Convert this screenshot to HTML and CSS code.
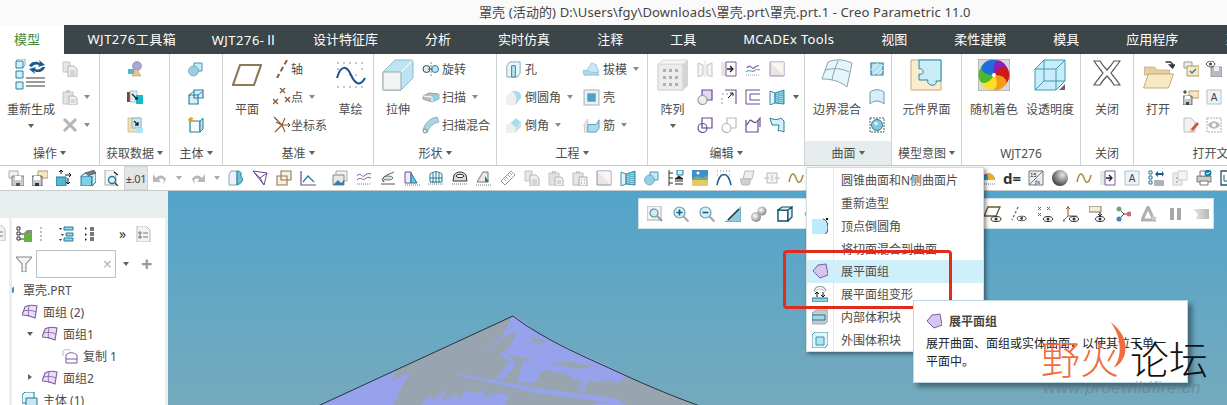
FILE: index.html
```html
<!DOCTYPE html>
<html lang="zh">
<head>
<meta charset="utf-8">
<title>Creo Parametric</title>
<link rel="stylesheet" href="styles.css">
</head>
<body>
<svg class="defs" aria-hidden="true">
<defs>
<symbol id="regen" viewBox="0 0 32 32"><g fill="#d2eef8" stroke="#2a7f9b"><path d="M1 2h7v7H1zM1 12h7v7H1zM1 23h7v7H1z"/></g><path d="M1 2l2-2h7v6l-2 3" fill="none" stroke="#2a7f9b" opacity=".6"/><path d="M14 7a7 6 0 0 1 11-3l-1-3 6 5-7 2 1-2a5 4 0 0 0-7 2z" fill="#1c5a8a"/><path d="M30 8a7 6 0 0 1-11 4l1 3-6-5 7-2-1 2a5 4 0 0 0 7-2z" fill="#1c5a8a"/><path d="M11 19h19M11 23h19M11 27h19" stroke="#9a9a9a" stroke-width="2"/></symbol>
<symbol id="copy" viewBox="0 0 16 16"><path d="M1 1h7v10H1z" fill="#e6e6e6" stroke="#c4c4c4"/><path d="M6 5h6l3 3v8H6z" fill="#eee" stroke="#b4b4b4"/><path d="M8 10h5M8 12h5M8 14h5" stroke="#bbb"/></symbol>
<symbol id="paste" viewBox="0 0 16 16"><path d="M1 3h10v12H1z" fill="#e2e2e2" stroke="#c4c4c4"/><path d="M4 1h4v3H4z" fill="#ccc"/><path d="M7 7h6l2 2v7H7z" fill="#f0f0f0" stroke="#b4b4b4"/><path d="M9 11h4M9 13h4" stroke="#bbb"/></symbol>
<symbol id="xgray" viewBox="0 0 16 16"><path d="M2 2l12 12M14 2L2 14" stroke="#b5b5b5" stroke-width="3"/></symbol>
<symbol id="data1" viewBox="0 0 16 16"><circle cx="10" cy="5" r="4.5" fill="#a9a6dd" stroke="#7d7ab8" stroke-width=".6"/><path d="M1 8h6v5H1z" fill="#56b4c9"/><path d="M9 7l5 8H5z" fill="#e6c68c" stroke="#a98d55" stroke-width=".5"/></symbol>
<symbol id="data2" viewBox="0 0 16 16"><path d="M0 3h3v10H0z" fill="#8f3c3c"/><path d="M3 2h7v11H3z" fill="#d8f0f5" stroke="#6ba9b8" stroke-width=".6"/><path d="M9 6h7v9H9z" fill="#16b9c4"/><path d="M5 5l5 5M8 10h2V8" stroke="#222" stroke-width="1.4" fill="none"/></symbol>
<symbol id="data3" viewBox="0 0 16 16"><path d="M1 1h13v14H1z" fill="#f4dfb8" stroke="#bda271" stroke-width=".6"/><path d="M5 1h9v10H5z" fill="#cbe8f1" stroke="#5f9db0" stroke-width=".6"/><path d="M9 11h7v5H9z" fill="#aee3f2"/><path d="M7 4l4 4M8 8h3V5" stroke="#222" stroke-width="1.3" fill="none"/></symbol>
<symbol id="bodySphere" viewBox="0 0 16 16"><path d="M6 2h8v8H6z" fill="#c7e8f4" stroke="#4b97ae"/><circle cx="5.5" cy="10" r="5" fill="#9bcde0" stroke="#4b97ae" stroke-width=".6"/></symbol>
<symbol id="bodyCube2" viewBox="0 0 16 16"><path d="M6 1h9v8H6zM1 6h9v9H1z" fill="#d7f0f8" stroke="#2a7f9b" stroke-width="1.2"/><path d="M1 6l4-3M10 6l4-3" stroke="#2a7f9b"/></symbol>
<symbol id="bodyNew" viewBox="0 0 16 16"><path d="M2 4h10v11H2z" fill="#f3fbfe" stroke="#2a7f9b" stroke-width="1.2"/><path d="M12 4l3-3v11l-3 3z" fill="#b8e4f2" stroke="#2a7f9b"/><path d="M3 3l0-3M3 3l-3 0M3 3l-2-2M3 3l2-2M3 3l2 1" stroke="#e8a21a" stroke-width="1.3"/></symbol>
<symbol id="plane" viewBox="0 0 30 24"><path d="M8 2h21l-7 20H1z" fill="none" stroke="#8e7a58" stroke-width="2.2"/></symbol>
<symbol id="axis" viewBox="0 0 18 18"><path d="M14 0L4 18" stroke="#8a5a35" stroke-width="2" stroke-dasharray="5 3"/></symbol>
<symbol id="point" viewBox="0 0 18 18"><path d="M7 0l5 5M12 0L7 5M0 11l5 5M5 11l-5 5M12 9l5 5M17 9l-5 5" stroke="#8a5a35" stroke-width="1.3"/></symbol>
<symbol id="csys" viewBox="0 0 18 18"><path d="M9 9L1 1M9 9h8M9 9L2 16M9 9l3-7M9 9l3 7M9 9L3 6" stroke="#8a5a35" stroke-width="1.1"/><path d="M2 2l2 2M15 7l2 2-2 2" stroke="#444" fill="none"/></symbol>
<symbol id="sketch" viewBox="0 0 30 28"><g fill="#c8c8c8"><path d="M1 1h2v2H1zM7 1h2v2H7zM13 1h2v2h-2zM19 1h2v2h-2zM25 1h2v2h-2zM1 7h2v2H1zM25 7h2v2h-2zM13 13h2v2h-2zM19 13h2v2h-2zM1 25h2v2H1zM7 25h2v2H7zM13 25h2v2h-2zM19 25h2v2h-2zM25 25h2v2h-2z"/></g><path d="M1 17C5 3 11 5 15 14s9 12 14 3" fill="none" stroke="#1f4f8f" stroke-width="2"/></symbol>
<symbol id="extrude" viewBox="0 0 32 32"><path d="M1 13l12-12h18v18L19 31H1z" fill="#bce4f2" stroke="#8fb9c6"/><path d="M1 13h18v18H1z" fill="#f2f3f3" stroke="#9aa" /><path d="M19 13L31 1" stroke="#fff"/></symbol>
<symbol id="revolve" viewBox="0 0 18 14"><path d="M9 0v14" stroke="#888" stroke-dasharray="2 1"/><circle cx="4.5" cy="7" r="3.5" fill="#d2eef8" stroke="#444"/><circle cx="13" cy="7" r="3.5" fill="#bfe3f0" stroke="#2a7f9b"/><path d="M6 7h5" stroke="#666"/></symbol>
<symbol id="sweep" viewBox="0 0 18 14"><path d="M1 6l6-3 10 1v5l-7 3-9-3z" fill="#b8bec2" stroke="#7d8488" stroke-width=".7"/><path d="M10 7l7-3v5l-7 3z" fill="#8ed0e6"/><path d="M1 6l9 1v5" stroke="#fff" fill="none"/></symbol>
<symbol id="sblend" viewBox="0 0 18 18"><path d="M1 14C3 7 8 2 15 1l2 5C11 7 7 11 5 17z" fill="#a4d6e8" stroke="#7d9aa6" stroke-width=".7"/><circle cx="3" cy="15" r="2" fill="#eee" stroke="#888"/></symbol>
<symbol id="hole" viewBox="0 0 18 18"><path d="M2 5l3-4h11v12l-3 4H2z" fill="#e9f6fb" stroke="#7aa7b7"/><path d="M7 5h4v12H7z" fill="#bfe3f0" stroke="#2a7f9b"/></symbol>
<symbol id="round" viewBox="0 0 18 18"><path d="M1 8l6-6h5c4 1 5 3 5 7l-6 8H1z" fill="#efefef"/><path d="M7 2h5c4 1 5 3 5 7l-6 8 1-7C12 6 10 4 7 2z" fill="#a6dcef"/></symbol>
<symbol id="chamfer" viewBox="0 0 18 18"><path d="M1 8l6-2 4 4v7H1z" fill="#efefef"/><path d="M6 6l6-5 5 5-6 5z" fill="#a6dcef"/><path d="M17 6v4l-6 7v-6z" fill="#d8d8d8"/></symbol>
<symbol id="draft" viewBox="0 0 18 16"><path d="M0 9h14l3 5H1z" fill="#a6dcef" stroke="#7aa7b7" stroke-width=".6"/><path d="M4 9l5-8 5 2 3 8H9z" fill="#c5eaf5" stroke="#8db5c2" stroke-width=".7"/></symbol>
<symbol id="shell" viewBox="0 0 16 16"><path d="M1 1h14v14H1z" fill="#eef1f2" stroke="#a8b4b8"/><path d="M4 4h8v8H4z" fill="#4ba3c9"/></symbol>
<symbol id="rib" viewBox="0 0 18 18"><path d="M1 8l4-6 1 12-4 3z" fill="#e4e4e4" stroke="#aaa" stroke-dasharray="1 1"/><path d="M5 8h9l3-5v9l-3 4H5z" fill="#a6dcef" stroke="#5a9db4"/></symbol>
<symbol id="pattern" viewBox="0 0 32 32"><path d="M1 5h25v26H1z" fill="#ececec" stroke="#c8c8c8"/><path d="M26 5l5-4v26l-5 4z" fill="#d5d5d5"/><path d="M1 5l5-4h25l-5 4z" fill="#f5f5f5" stroke="#ddd"/><g fill="#aab0b4"><path d="M6 10h3v3H6zM12 10h3v3h-3zM18 10h3v3h-3zM6 17h3v3H6zM12 17h3v3h-3zM18 17h3v3h-3zM6 24h3v3H6zM12 24h3v3h-3zM18 24h3v3h-3z"/></g></symbol>
<symbol id="mirror" viewBox="0 0 16 16"><path d="M1 2l5 2v10l-5 2zM15 2l-5 2v10l5 2z" fill="#f3f3f3" stroke="#c4c4c4"/><path d="M8 0v16" stroke="#ddd"/></symbol>
<symbol id="extend" viewBox="0 0 16 16"><path d="M0 1h5v14H0z" fill="#e6e6e6"/><path d="M5 1h10v14H5z" fill="#fff" stroke="#7e5aa0"/><path d="M6 8h5M9 5l3 3-3 3" stroke="#222" stroke-width="1.3" fill="none"/></symbol>
<symbol id="wave" viewBox="0 0 16 16"><path d="M2 7c3-5 5 2 7 0s3-3 5-2" fill="none" stroke="#7e5aa0" stroke-width="1.2"/><path d="M1 11c3-4 6 1 8-1s3-2 6-1" fill="none" stroke="#5ba7c4" stroke-width="1.2"/><path d="M1 14h14" stroke="#9a9a9a" stroke-dasharray="1 1"/></symbol>
<symbol id="trim" viewBox="0 0 16 16"><path d="M1 1h14v14H1z" fill="#e8e8e0" stroke="#a183bd"/><path d="M1 1l14 14V1z" fill="#fff" opacity=".6"/></symbol>
<symbol id="merge" viewBox="0 0 16 16"><path d="M5 1h10v10H5z" fill="#e2d9f0" stroke="#6b4a90" stroke-width="1.2"/><circle cx="5.5" cy="11" r="4.5" fill="#eee" stroke="#9a9a9a" stroke-width="1.2"/></symbol>
<symbol id="offset" viewBox="0 0 16 16"><path d="M1 5h2M5 5h2M9 5h2M1 9v2M1 13v2" stroke="#999"/><path d="M4 1h11v14" fill="none" stroke="#6b4a90" stroke-width="1.1"/><path d="M7 9l5-5M9 4h3v3" stroke="#222" fill="none"/></symbol>
<symbol id="thick" viewBox="0 0 16 16"><path d="M15 1H1v14h14M15 5H5v6h10" fill="none" stroke="#6b4a90"/></symbol>
<symbol id="solid" viewBox="0 0 16 16"><path d="M1 2l5 2v10l-5 2z" fill="#e3f4fa" stroke="#3d8aa4"/><path d="M6 4l9-3v14l-9-1z" fill="#5fb8cf" stroke="#3d8aa4"/><path d="M8 4v10M11 3v11M13 3v11" stroke="#d7f0f8" stroke-dasharray="1 1"/></symbol>
<symbol id="intersect" viewBox="0 0 16 16"><path d="M5 1h10v10H5z" fill="#fff" stroke="#6b4a90" stroke-width="1.2"/><circle cx="5.5" cy="11" r="4.5" fill="none" stroke="#6b4a90" stroke-width="1.2"/><path d="M5 11V7M5 11h4" stroke="#888"/></symbol>
<symbol id="project" viewBox="0 0 16 16"><path d="M6 1h9v10H6z" fill="#fff" stroke="#bbb" stroke-width="1.2"/><circle cx="5.5" cy="11" r="4.5" fill="#fff" stroke="#b5b5b5" stroke-width="1.2"/></symbol>
<symbol id="wrap" viewBox="0 0 16 16"><path d="M1 3v12h12V3" fill="none" stroke="#6b4a90" stroke-width="1.2"/><path d="M1 8c4-2 3-7 6-4s4 2 8-3v9" fill="none" stroke="#6b4a90" stroke-width="1.2"/></symbol>
<symbol id="flatten" viewBox="0 0 16 16"><path d="M1 1c3 2 9 2 11 0l3 3v11c-3-1-4-2-6-1l1-6H3z" fill="#d6f0fa" stroke="#2a7f9b"/></symbol>
<symbol id="boundary" viewBox="0 0 32 32"><path d="M7 3c7-3 15-3 24 1l-5 24C19 22 10 20 1 20z" fill="#e4f5fb" stroke="#88a5ae"/><path d="M4 11c8-2 17-2 24 2M17 2c-3 7-5 13-6 19" stroke="#88a5ae" fill="none"/></symbol>
<symbol id="fill" viewBox="0 0 16 16"><path d="M2 2h12v12H2z" fill="#b4dff0" stroke="#2a7f9b" stroke-width="1.2"/><path d="M2 9l7-7M4 14L14 4M9 14l5-5" stroke="#eaf7fb"/></symbol>
<symbol id="freeform" viewBox="0 0 16 16"><path d="M1 3c4-3 10-3 14 0v12c-4-4-10-4-14 0z" fill="#d6f0fa" stroke="#6f9aac"/></symbol>
<symbol id="style" viewBox="0 0 16 16"><path d="M1 1h14v14H1z" fill="none" stroke="#555" stroke-dasharray="2 1"/><circle cx="8" cy="8" r="5.5" fill="#7fc7e0" stroke="#2a7f9b"/><circle cx="7" cy="6.5" r="2" fill="#cdeef8"/></symbol>
<symbol id="puzzle" viewBox="0 0 32 32"><path d="M1 1h30v30H1z" fill="#fbeccb" stroke="#c9a978"/><path d="M9 1h22v21h-5c1 3-2 5-5 4s-4-3-3-5H9V15c3 1 5-1 4-3s-2-3-4-2z" fill="#c9edf8" stroke="#1f8aa8"/></symbol>
<symbol id="colorwheel" viewBox="0 0 32 32"><path d="M0 0h32v32H0z" fill="#d9d9d9" stroke="#9a9a9a"/><g id="petals"><path d="M16 16C12 10 12 3 17 1c6 0 11 3 13 10-5-1-10 1-14 5z" fill="#8a20b8"/><path d="M16 16C12 10 12 3 17 1c6 0 11 3 13 10-5-1-10 1-14 5z" fill="#d01818" transform="rotate(60 16 16)"/><path d="M16 16C12 10 12 3 17 1c6 0 11 3 13 10-5-1-10 1-14 5z" fill="#f59a14" transform="rotate(120 16 16)"/><path d="M16 16C12 10 12 3 17 1c6 0 11 3 13 10-5-1-10 1-14 5z" fill="#f9e027" transform="rotate(180 16 16)"/><path d="M16 16C12 10 12 3 17 1c6 0 11 3 13 10-5-1-10 1-14 5z" fill="#4cb82b" transform="rotate(240 16 16)"/><path d="M16 16C12 10 12 3 17 1c6 0 11 3 13 10-5-1-10 1-14 5z" fill="#1e6fd8" transform="rotate(300 16 16)"/></g><circle cx="16" cy="16" r="2" fill="#fff"/></symbol>
<symbol id="glass" viewBox="0 0 32 32"><path d="M1 10l9-9h21v21l-9 9H1z" fill="#c9edf8" stroke="#3a9ab6"/><path d="M1 10h21v21M22 10l9-9M10 1v21h21M10 22l-9 9" fill="none" stroke="#3a9ab6"/><path d="M25 31l6-6v6z" fill="#666"/></symbol>
<symbol id="closex" viewBox="0 0 28 28"><path d="M1 2h6c3 5 5 7 7 9 2-2 4-4 7-9h6c-4 6-7 9-9 12 2 3 5 6 9 12h-6c-3-5-5-7-7-9-2 2-4 4-7 9H1c4-6 7-9 9-12C8 11 5 8 1 2z" fill="#fff" stroke="#555" stroke-width="1.2"/></symbol>
<symbol id="folder" viewBox="0 0 32 28"><path d="M2 6h10l3 3h12v5H2z" fill="#e7cf9e" stroke="#b59a66" stroke-width=".6"/><path d="M1 27l5-14h25l-5 14z" fill="#f9e8c4" stroke="#b59a66" stroke-width=".8"/><path d="M23 1h5l2 2v3M30 7l-3-3h5z" fill="none" stroke="#333" stroke-width="1.3"/></symbol>
<symbol id="s1" viewBox="0 0 16 16"><path d="M1 1h8v6H1z" fill="#eee" stroke="#999"/><path d="M4 5h12v10H4z" fill="#f6e7c5" stroke="#b49a66"/><path d="M7 10l2 2 4-4" stroke="#2a7f9b" fill="none" stroke-width="1.4"/></symbol>
<symbol id="saveeye" viewBox="0 0 16 16"><path d="M5 6h11v10H5z" fill="#b8bcc0" stroke="#777" stroke-width=".6"/><path d="M8 6h5v4H8z" fill="#eef"/><path d="M0 3c3-4 7-4 9 0-2 4-6 4-9 0z" fill="#fff" stroke="#444"/><circle cx="4.5" cy="3" r="1.5" fill="#444"/></symbol>
<symbol id="saveas" viewBox="0 0 16 16"><path d="M6 2h10v7H6z" fill="#f6e7c5" stroke="#b49a66"/><path d="M0 7h9v9H0z" fill="#c2c6ca" stroke="#444" stroke-width=".7"/><path d="M2 7h5v3H2z" fill="#fff"/><path d="M3 13h3v3H3z" fill="#444"/><path d="M2 1v4M0 3h4" stroke="#222"/></symbol>
<symbol id="abox" viewBox="0 0 16 16"><path d="M1 1h14v14H1z" fill="#eef3f6" stroke="#b4c2c8"/><text x="8" y="12" font-size="10" text-anchor="middle" fill="#445" font-family="Liberation Sans">A</text></symbol>
<symbol id="erase" viewBox="0 0 16 16"><path d="M1 1h7l4 4v10H1z" fill="#f2f2f2" stroke="#c0c0c0"/><path d="M7 13l7-8 2 2-7 8z" fill="#d4503c"/><path d="M6 15l2-3 2 2z" fill="#e8d9a0"/></symbol>
<symbol id="eyebox" viewBox="0 0 16 16"><path d="M1 1h14v14H1z" fill="none" stroke="#aaa" stroke-dasharray="2 1"/><path d="M2 8c3-5 9-5 12 0-3 5-9 5-12 0z" fill="#bbb"/><circle cx="8" cy="8" r="2" fill="#fff"/></symbol>
<symbol id="qsave" viewBox="0 0 16 16"><path d="M1 1h9v7H1z" fill="#f2f2f2" stroke="#aaa"/><path d="M4 6h12v10H4z" fill="#c8cbce" stroke="#666" stroke-width=".7"/><path d="M7 6h6v4H7z" fill="#fff"/><path d="M8 13h4v3H8z" fill="#555"/></symbol>
<symbol id="qsave2" viewBox="0 0 16 16"><path d="M6 1h10v7H6z" fill="#f6e7c5" stroke="#b49a66"/><path d="M0 6h10v10H0z" fill="#c8cbce" stroke="#333" stroke-width=".7"/><path d="M2 6h6v4H2z" fill="#fff"/><path d="M3 13h4v3H3z" fill="#333"/></symbol>
<symbol id="qmove" viewBox="0 0 16 16"><path d="M0 7h10v9H0z" fill="#52b8d4" stroke="#1f7a96"/><path d="M5 0v4M3 2l2-2 2 2M9 5h6M13 3l2 2-2 2M12 8v6M10 12l2 2 2-2" stroke="#111" fill="none"/></symbol>
<symbol id="qbox" viewBox="0 0 16 16"><path d="M1 6h11v10H1z" fill="#7fd0e6" stroke="#1f7a96"/><path d="M1 6l4-3h11v9l-4 4V6" fill="#c7ecf8" stroke="#1f7a96"/><path d="M5 3l9-3 2 3-8 3" fill="#777" stroke="#444" stroke-width=".5"/></symbol>
<symbol id="qfind" viewBox="0 0 16 16"><path d="M1 0h8l3 3v12H1z" fill="#f4f4f4" stroke="#aaa"/><circle cx="8" cy="10" r="3.5" fill="#e8f6fb" stroke="#1f7a96" stroke-width="1.4"/><path d="M11 13l3 3M10 2l4 3" stroke="#333" stroke-width="1.3"/></symbol>
<symbol id="undo" viewBox="0 0 16 16"><path d="M4 8c3-4 8-3 10 1-1 2-2 4-3 5l1-4c-2-2-4-2-5 0l2 2H1V4z" fill="#b9b9b9"/></symbol>
<symbol id="redo" viewBox="0 0 16 16"><path d="M12 8C9 4 4 5 2 9c1 2 2 4 3 5L4 10c2-2 4-2 5 0l-2 2h8V4z" fill="#b9b9b9"/></symbol>
<symbol id="qedge" viewBox="0 0 16 16"><path d="M1 4l2-3h6v14H1z" fill="#eef" stroke="#8aa"/><path d="M9 1c2 0 5 1 4 4-1 2 3 3 1 6-1 3-4 3-5 4z" fill="#6cc2dc" stroke="#1f7a96"/></symbol>
<symbol id="qtri" viewBox="0 0 16 16"><path d="M1 1l14 2-3 12z" fill="#fff" stroke="#6b4a90"/><path d="M1 1l7 7 7-5M8 8l4 7" fill="none" stroke="#6b4a90"/></symbol>
<symbol id="qplanes" viewBox="0 0 16 16"><path d="M5 1h10v9H5zM1 6h10v9H1z" fill="#f8f1df" stroke="#8e7a58" stroke-width="1.1"/></symbol>
<symbol id="qangle" viewBox="0 0 16 16"><path d="M1 1v14h15" fill="none" stroke="#6b4a90" stroke-width="1.2"/><path d="M3 12l5-6 6 6" fill="none" stroke="#1f7a96" stroke-width="1.2"/></symbol>
<symbol id="qslide" viewBox="0 0 16 16"><path d="M4 1h11v10H4z" fill="#f1f1f1" stroke="#aaa"/><path d="M1 5h11v10H1z" fill="#e8e8e8" stroke="#888"/><path d="M1 15l5-5 3 3 3-3v5z" fill="#3a7fae"/></symbol>
<symbol id="qcurve" viewBox="0 0 16 16"><path d="M1 6c3-5 5 2 7 0s4-3 7-2M1 10c3-4 6 1 8-1s3-2 6-1" fill="none" stroke="#7e5aa0"/><path d="M1 14h14" stroke="#777" stroke-dasharray="1 1"/></symbol>
<symbol id="qgauge" viewBox="0 0 16 16"><ellipse cx="8" cy="8" rx="5" ry="2" fill="#cfe9f3" stroke="#777"/><path d="M2 10c3-6 9-6 12-8M1 14h14" stroke="#555" fill="none"/><path d="M2 10l3 1-2 1z" fill="#222"/></symbol>
<symbol id="qsec" viewBox="0 0 16 16"><path d="M1 2h6v11H1z" fill="#eef" stroke="#6b4a90"/><path d="M7 3l6 10H7z" fill="#6cc2dc" stroke="#1f7a96"/><path d="M1 15h15" stroke="#777" stroke-dasharray="1 1"/></symbol>
<symbol id="qmesh" viewBox="0 0 16 16"><path d="M2 4c4-3 8-3 12 0v8H2zM8 1v12M2 8h12M5 3v10M11 3v10" fill="none" stroke="#1f7a96"/><path d="M0 14h16" stroke="#777" stroke-dasharray="1 1"/></symbol>
<symbol id="qgrid" viewBox="0 0 16 16"><path d="M2 5c3-4 9-4 12 0l1 6H1z" fill="#dcdcdc" stroke="#333"/><ellipse cx="8" cy="6" rx="4" ry="1.6" fill="#fff" stroke="#333"/><path d="M0 14h16" stroke="#777" stroke-dasharray="1 1"/></symbol>
<symbol id="qwedge" viewBox="0 0 16 16"><path d="M1 12h11V2H7z" fill="#e9e9e9" stroke="#777"/><path d="M9 6v6h4z" fill="#1f7a96"/><path d="M0 15h16" stroke="#777" stroke-dasharray="1 1"/></symbol>
<symbol id="qruler" viewBox="0 0 16 16"><path d="M1 11L11 1l4 4L5 15z" fill="#fff" stroke="#9a9a9a"/><path d="M4 9l2 2M6 7l2 2M8 5l2 2M10 3l2 2" stroke="#9a9a9a"/></symbol>
<symbol id="qtable" viewBox="0 0 16 16"><path d="M1 3h10v12H1z" fill="#e6e6e6" stroke="#bbb"/><path d="M4 1h4v3H4z" fill="#ccc"/><path d="M7 7h8v9H7z" fill="#f3f3f3" stroke="#aaa"/><path d="M9 10h1M12 10h1M9 13h1M12 13h1" stroke="#999"/></symbol>
<symbol id="qtree" viewBox="0 0 16 16"><path d="M1 0v16M1 3h4M1 8h4M1 13h4" stroke="#333"/><path d="M9 0h6v5H9z" fill="#d2eef8" stroke="#1f7a96"/><path d="M7 9l4-3 4 3zM7 11h8M7 14h8" fill="#222" stroke="#222"/></symbol>
<symbol id="qscene" viewBox="0 0 16 16"><path d="M0 0h16v16H0z" fill="#3e8fc9"/><path d="M0 9l5-3 5 2 6-3v5H0z" fill="#7ea97a"/><path d="M0 10h16v6H0z" fill="#e6c868"/><circle cx="6" cy="3" r="1.5" fill="#fff"/></symbol>
<symbol id="qarc" viewBox="0 0 16 16"><path d="M1 1h14M1 5h14" stroke="#888" stroke-dasharray="1 2"/><path d="M1 15c3-14 11-14 14 0" fill="none" stroke="#1f5a8a" stroke-width="1.6"/></symbol>
<symbol id="qflat" viewBox="0 0 16 16"><path d="M5 1h9l-2 8H3z" fill="#eee" stroke="#bbb"/><path d="M0 9h11l-2 6H2z" fill="#d0d0d0" stroke="#bbb"/></symbol>
<symbol id="qfrag" viewBox="0 0 16 16"><path d="M3 3h10v10H3z" fill="#f3f3f3" stroke="#bbb"/><path d="M0 8h5M11 8h5M8 5v6" stroke="#bbb"/></symbol>
<symbol id="qsine" viewBox="0 0 16 16"><path d="M1 12C3 2 6 2 8 8s5 6 7-3" fill="none" stroke="#a98a4a" stroke-width="1.5"/></symbol>
<symbol id="qcolor" viewBox="0 0 16 16"><path d="M2 10C2 2 14 1 15 10z" fill="#8a4ac8"/><path d="M7 4c4-2 7 1 8 6H8z" fill="#e8b020"/><path d="M2 10C3 5 7 4 8 10z" fill="#2a9cd8"/><path d="M0 14h16" stroke="#777" stroke-dasharray="1 1"/></symbol>
<symbol id="qfx" viewBox="0 0 16 16"><path d="M1 1h14v14H1z" fill="#eee" stroke="#777"/><path d="M1 15L15 1" stroke="#777"/><text x="2" y="7" font-size="6" fill="#222" font-family="Liberation Sans">15</text><text x="7" y="14" font-size="7" font-style="italic" fill="#222" font-family="Liberation Serif">fx</text></symbol>
<symbol id="qsphere" viewBox="0 0 16 16"><defs><radialGradient id="sph" cx=".65" cy=".3" r=".8"><stop offset="0" stop-color="#e6e6e6"/><stop offset=".6" stop-color="#7a7a7a"/><stop offset="1" stop-color="#333"/></radialGradient></defs><circle cx="8" cy="8" r="8" fill="url(#sph)"/></symbol>
<symbol id="qlist" viewBox="0 0 16 16"><path d="M1 1h3v3H1zM1 6h3v3H1zM1 11h3v3H1z" fill="none" stroke="#1f7a96"/><path d="M6 11h10M6 13h10M6 15h10" stroke="#666"/><path d="M7 4l3-3v2h4V1l2 3-2 3V5h-4v2z" fill="#1c5a8a"/></symbol>
<symbol id="qpart" viewBox="0 0 16 16"><path d="M1 3h9v12H1z" fill="#eee" stroke="#ccc"/><path d="M6 1h9v9H6z" fill="#f4f4f4" stroke="#ccc"/><path d="M4 7h2v2H4zM4 11h2v2H4z" fill="#bbb"/></symbol>
<symbol id="qprint" viewBox="0 0 16 16"><path d="M1 6h14v6H1z" fill="#c8cdd0" stroke="#555" stroke-width=".7"/><path d="M4 1h8v5H4zM4 11h8v4H4z" fill="#fff" stroke="#777"/><circle cx="12" cy="3" r="3.5" fill="#1f7aa8"/><path d="M10 3l2 1 2-2" stroke="#fff" fill="none"/></symbol>
<symbol id="qwin" viewBox="0 0 16 16"><path d="M1 1h14v14H1z" fill="#fff" stroke="#1f5a6a" stroke-width="1.3"/><path d="M4 5v6h8" fill="none" stroke="#1f5a6a"/></symbol>
<symbol id="vfit" viewBox="0 0 16 16"><path d="M0 0h14v14H0z" fill="#f3f6f7" stroke="#a8a8a8"/><circle cx="7" cy="7" r="4" fill="#cdeaf6" stroke="#5a8a9c" stroke-width="1.2"/><path d="M10 10l5 5" stroke="#999" stroke-width="2"/></symbol>
<symbol id="vin" viewBox="0 0 16 16"><circle cx="6.5" cy="6.5" r="5.5" fill="#d7eef7" stroke="#6a9bad" stroke-width="1.2"/><path d="M6.5 3.5v6M3.5 6.5h6" stroke="#0f5f8a" stroke-width="1.6"/><path d="M10.500 10.500l5 5" stroke="#a8a8a8" stroke-width="2.2"/></symbol>
<symbol id="vout" viewBox="0 0 16 16"><circle cx="6.5" cy="6.5" r="5.5" fill="#d7eef7" stroke="#6a9bad" stroke-width="1.2"/><path d="M3.500 6.500h6" stroke="#0f5f8a" stroke-width="1.6"/><path d="M10.500 10.500l5 5" stroke="#a8a8a8" stroke-width="2.2"/></symbol>
<symbol id="vrepaint" viewBox="0 0 16 16"><path d="M0 0h16v16H0z" fill="#8ccbe0" stroke="#6a9bad"/><path d="M0 0h16L1 15H0z" fill="#fff"/><path d="M3 14L14 3" stroke="#333" stroke-width="1.6"/></symbol>
<symbol id="vshade" viewBox="0 0 16 16"><defs><radialGradient id="shd" cx=".4" cy=".4" r=".7"><stop offset="0" stop-color="#fff"/><stop offset="1" stop-color="#777"/></radialGradient></defs><circle cx="11" cy="5" r="4.500" fill="url(#shd)"/><circle cx="5" cy="11" r="5" fill="url(#shd)"/></symbol>
<symbol id="vcube" viewBox="0 0 16 16"><path d="M1 4h10v11H1z" fill="#fff" stroke="#0f4f66" stroke-width="1.400"/><path d="M11 4l4-3v10l-4 4zM1 4l4-3h10l-4 3z" fill="#d9f0f8" stroke="#0f4f66" stroke-width="1.200"/></symbol>
<symbol id="vhex" viewBox="0 0 16 16"><path d="M2 8l4-7h4l4 7-4 7H6z" fill="#e3f5fb" stroke="#78b7cc"/></symbol>
<symbol id="vplane" viewBox="0 0 20 16"><path d="M5 1h12l-4 9H1z" fill="none" stroke="#6b5530" stroke-width="1.300"/><ellipse cx="13" cy="13" rx="5" ry="2.500" fill="#fff" stroke="#333"/><circle cx="13" cy="13" r="1.500" fill="#333"/></symbol>
<symbol id="vaxis" viewBox="0 0 18 16"><path d="M8 0L1 15" stroke="#8a5a35" stroke-width="1.400" stroke-dasharray="3 2"/><ellipse cx="12" cy="13" rx="5" ry="2.500" fill="#fff" stroke="#333"/><circle cx="12" cy="13" r="1.500" fill="#333"/></symbol>
<symbol id="vpoint" viewBox="0 0 16 16"><path d="M1 1l3 3M4 1L1 4M10 1l3 3M13 1l-3 3M1 7l3 3M4 7l-3 3" stroke="#8a5a35"/><ellipse cx="11" cy="13" rx="4.500" ry="2.500" fill="#fff" stroke="#333"/><circle cx="11" cy="13" r="1.500" fill="#333"/></symbol>
<symbol id="vcsys" viewBox="0 0 16 16"><path d="M5 0v10M5 10H14M5 10l-5 5" stroke="#8a5a35" fill="none"/><path d="M3 3l2-2 2 2M0 13v2h2" stroke="#8a5a35" fill="none"/><ellipse cx="11" cy="13" rx="4.500" ry="2.500" fill="#fff" stroke="#333"/><circle cx="11" cy="13" r="1.500" fill="#333"/></symbol>
<symbol id="vnote" viewBox="0 0 16 16"><path d="M0 0h12v6H0z" fill="#f5e9cf" stroke="#777"/><path d="M11 6v4M9 8l2 2 2-2" stroke="#222" fill="none"/><ellipse cx="11" cy="13" rx="4.500" ry="2.500" fill="#fff" stroke="#333"/><circle cx="11" cy="13" r="1.500" fill="#333"/></symbol>
<symbol id="vnet" viewBox="0 0 16 16"><path d="M4 3l5 5-5 5M9 8h5" stroke="#444" fill="none"/><circle cx="4" cy="3" r="2.500" fill="#6ea870"/><circle cx="14" cy="8" r="2.500" fill="#d46a70"/><circle cx="4" cy="13" r="2.500" fill="#3e85b8"/></symbol>
<symbol id="vtri" viewBox="0 0 16 16"><path d="M7 1L1 14h12z" fill="none" stroke="#b0b0b0" stroke-width="3"/><path d="M11 9l5 3-5 3z" fill="#c8c8c8"/></symbol>
<symbol id="vpause" viewBox="0 0 16 16"><path d="M3 2h4v12H3zM10 2h4v12h-4z" fill="#a8a8a8"/></symbol>
<symbol id="vgrad" viewBox="0 0 16 16"><defs><linearGradient id="gr"><stop offset="0" stop-color="#e6e6e6"/><stop offset="1" stop-color="#b8b8b8"/></linearGradient></defs><path d="M0 3h16v10H3L5 8z" fill="url(#gr)"/></symbol>
<symbol id="mvertex" viewBox="0 0 16 16"><path d="M0 1h11c4 1 5 5 5 9 0 3-1 5-3 6H0z" fill="#bdebfb"/><path d="M11 1c4 1 5 5 5 9 0 3-1 5-3 6" fill="none" stroke="#333"/><path d="M14 0h2v2h-2z" fill="#111"/></symbol>
<symbol id="flat" viewBox="0 0 16 16"><path d="M6 2l8-1 2 11-8 3-7-7z" fill="#d5c6ef" stroke="#7e5aa0" stroke-width="1"/></symbol>
<symbol id="deform" viewBox="0 0 16 16"><path d="M2 5c2-6 10-6 12 0" fill="none" stroke="#999" stroke-width="1.200"/><path d="M3 6c2-4 8-4 10 0" fill="none" stroke="#bbb"/><path d="M0 12h16v4H0z" fill="#8fd4ea" stroke="#1f7a96"/><path d="M5 11V6M3 8l2-2 2 2M11 6v5M9 9l2 2 2-2" stroke="#111" fill="none"/></symbol>
<symbol id="mint" viewBox="0 0 16 16"><path d="M0 4l4-3h12v11l-3 3H0z" fill="#c8c8c8" stroke="#aaa"/><path d="M0 6h13v5H0z" fill="#9fd9ea" stroke="#1f7a96"/></symbol>
<symbol id="mout" viewBox="0 0 16 16"><path d="M0 3l3-3h13v12l-3 4H0z" fill="#e5f5fa" stroke="#3d93ad"/><path d="M4 5h8v8H4z" fill="#b8e3f0" stroke="#3d93ad"/></symbol>
<symbol id="tbar1" viewBox="0 0 16 16"><path d="M1 1h3v3H1zM1 6h3v3H1zM1 11h3v3H1z" fill="none" stroke="#333"/><path d="M4 8h4M4 13h4" stroke="#333"/><path d="M8 7h8v9H8z" fill="#62b33f"/><path d="M8 7l3-3h5v3z" fill="#888"/></symbol>
<symbol id="tdots" viewBox="0 0 4 16"><path d="M1 1h2v2H1zM1 5h2v2H1zM1 9h2v2H1zM1 13h2v2H1z" fill="#c0c0c0"/></symbol>
<symbol id="tbar2" viewBox="0 0 16 16"><path d="M6 1h9v3H6zM8 7h7v3H8zM6 12h9v3H6z" fill="#9bd6ea" stroke="#1f7a96"/><path d="M1 2h3l-1.500 2zM3 8h3l-1.500 2zM1 13h3l-1.500 2z" fill="#333"/></symbol>
<symbol id="tbar3" viewBox="0 0 9 16"><path d="M0 1l2 1.500L0 4zM0 7l2 1.500L0 10zM0 12l2 1.500L0 15z" fill="#333"/><path d="M5 1h4v4H5zM5 6h4v4H5zM5 11h4v4H5z" fill="#777"/></symbol>
<symbol id="tdoc" viewBox="0 0 16 16"><path d="M1 0h9l4 4v12H1z" fill="#f1f3f4" stroke="#b8bec2"/><path d="M3 6h2v2H3zM3 10h2v2H3z" fill="none" stroke="#777"/><path d="M7 7h5M7 11h5" stroke="#777"/></symbol>
<symbol id="funnel" viewBox="0 0 16 16"><path d="M0 1h16l-6 7v8H6V8z" fill="#f3f3f3" stroke="#888" stroke-width="1.100"/></symbol>
<symbol id="quilt" viewBox="0 0 16 16"><path d="M3 3C6 1 11 1 15 2l-2 12C9 12 4 11 0 11z" fill="#e8def4" stroke="#7e5aa0" stroke-width="1.100"/><path d="M1 7c4-1 9-1 13 1M7 2C6 6 6 10 7 13" stroke="#7e5aa0" stroke-width=".8" fill="none"/></symbol>
<symbol id="copied" viewBox="0 0 16 16"><path d="M1 8V3c2-2 6-2 8 0" fill="none" stroke="#bbb"/><path d="M4 15V7c2-3 8-3 11 0v8z" fill="#fff" stroke="#7e5aa0"/><path d="M4 11h11" stroke="#7e5aa0"/></symbol>
<symbol id="bodies" viewBox="0 0 16 16"><path d="M0 3l3-3h9v11H0z" fill="#e8f6fb" stroke="#1f7a96"/><path d="M4 6h11v10H4z" fill="#c7e6f1" stroke="#1f7a96"/></symbol>
<symbol id="prt" viewBox="0 0 8 14"><path d="M0 3l4-3v11l-4 3z" fill="#3c94b4"/></symbol>
<symbol id="flame" viewBox="0 0 30 50" preserveAspectRatio="none"><path d="M1 0c18 8 29 20 26 32-2 8-9 14-21 18 9-7 12-15 11-24C16 16 10 8 1 0z" fill="#f26d3d"/></symbol>
</defs>
</svg>

<header class="titlebar"><span>罩壳 (活动的) D:\Users\fgy\Downloads\罩壳.prt\罩壳.prt.1 - Creo Parametric 11.0</span></header>

<nav class="tabs">
<span class="tab active">模型</span>
<span class="tab tight">WJT276工具箱</span>
<span class="tab tight">WJT276-<span class="cjk">Ⅱ</span></span>
<span class="tab">设计特征库</span>
<span class="tab">分析</span>
<span class="tab">实时仿真</span>
<span class="tab">注释</span>
<span class="tab">工具</span>
<span class="tab latin">MCADEx Tools</span>
<span class="tab">视图</span>
<span class="tab">柔性建模</span>
<span class="tab">模具</span>
<span class="tab">应用程序</span>
<span class="tab">系</span>
</nav>

<section class="ribbon">
<div class="group g-op">
<div class="gbody">
<div class="big w62"><span class="bigico"><svg class="b32"><use href="#regen"/></svg></span><span>重新生成</span><i class="caret"></i></div>
<div class="col"><div class="row"><svg class="ic"><use href="#copy"/></svg></div><div class="row"><svg class="ic"><use href="#paste"/></svg><i class="caret ml6"></i></div><div class="row"><svg class="ic"><use href="#xgray"/></svg><i class="caret ml6"></i></div></div>
</div>
<div class="glabel">操作<i class="caret"></i></div>
</div>
<div class="group g-get">
<div class="gbody center"><div class="col"><div class="row"><svg class="ic"><use href="#data1"/></svg></div><div class="row"><svg class="ic"><use href="#data2"/></svg></div><div class="row"><svg class="ic"><use href="#data3"/></svg></div></div></div>
<div class="glabel">获取数据<i class="caret"></i></div>
</div>
<div class="group g-body">
<div class="gbody center"><div class="col"><div class="row"><svg class="ic"><use href="#bodySphere"/></svg></div><div class="row"><svg class="ic"><use href="#bodyCube2"/></svg></div><div class="row"><svg class="ic"><use href="#bodyNew"/></svg></div></div></div>
<div class="glabel">主体<i class="caret"></i></div>
</div>
<div class="group g-datum">
<div class="gbody">
<div class="big w48"><span class="bigico"><svg class="plane"><use href="#plane"/></svg></span><span>平面</span></div>
<div class="col w56 pl2"><div class="row"><svg class="ic18"><use href="#axis"/></svg><span>轴</span></div><div class="row"><svg class="ic18"><use href="#point"/></svg><span>点</span><i class="caret ml6"></i></div><div class="row"><svg class="ic18"><use href="#csys"/></svg><span>坐标系</span></div></div>
<div class="big w47"><span class="bigico"><svg class="sketch"><use href="#sketch"/></svg></span><span>草绘</span></div>
</div>
<div class="glabel">基准<i class="caret"></i></div>
</div>
<div class="group g-shape">
<div class="gbody">
<div class="big w48"><span class="bigico"><svg class="b32"><use href="#extrude"/></svg></span><span>拉伸</span></div>
<div class="col"><div class="row"><svg class="ic18"><use href="#revolve"/></svg><span class="sp2">旋转</span></div><div class="row"><svg class="ic18"><use href="#sweep"/></svg><span class="sp2">扫描</span><i class="caret ml6"></i></div><div class="row"><svg class="ic18"><use href="#sblend"/></svg><span class="sp2">扫描混合</span></div></div>
</div>
<div class="glabel">形状<i class="caret"></i></div>
</div>
<div class="group g-eng">
<div class="gbody pl8">
<div class="col w78"><div class="row"><svg class="ic17"><use href="#hole"/></svg><span class="sp3">孔</span></div><div class="row"><svg class="ic17"><use href="#round"/></svg><span class="sp3">倒圆角</span><i class="caret ml6"></i></div><div class="row"><svg class="ic17"><use href="#chamfer"/></svg><span class="sp3">倒角</span><i class="caret ml6"></i></div></div>
<div class="col"><div class="row"><svg class="ic17"><use href="#draft"/></svg><span class="sp3">拔模</span><i class="caret ml6"></i></div><div class="row"><svg class="ic17"><use href="#shell"/></svg><span class="sp3">壳</span></div><div class="row"><svg class="ic17"><use href="#rib"/></svg><span class="sp3">筋</span><i class="caret ml6"></i></div></div>
</div>
<div class="glabel">工程<i class="caret"></i></div>
</div>
<div class="group g-edit">
<div class="gbody">
<div class="big w49"><span class="bigico"><svg class="b32"><use href="#pattern"/></svg></span><span>阵列</span><i class="caret"></i></div>
<div class="editgrid">
<svg class="ic"><use href="#mirror"/></svg><svg class="ic"><use href="#extend"/></svg><svg class="ic"><use href="#wave"/></svg><svg class="ic"><use href="#trim"/></svg><span></span>
<svg class="ic"><use href="#merge"/></svg><svg class="ic"><use href="#offset"/></svg><svg class="ic"><use href="#thick"/></svg><svg class="ic"><use href="#solid"/></svg><i class="caret"></i>
<svg class="ic"><use href="#intersect"/></svg><svg class="ic"><use href="#project"/></svg><svg class="ic"><use href="#wrap"/></svg><svg class="ic"><use href="#flatten"/></svg><span></span>
</div>
</div>
<div class="glabel">编辑<i class="caret"></i></div>
</div>
<div class="group g-surf">
<div class="gbody">
<div class="big w64"><span class="bigico"><svg class="b32"><use href="#boundary"/></svg></span><span>边界混合</span></div>
<div class="col"><div class="row"><svg class="ic"><use href="#fill"/></svg></div><div class="row"><svg class="ic"><use href="#freeform"/></svg></div><div class="row"><svg class="ic"><use href="#style"/></svg></div></div>
</div>
<div class="glabel open">曲面<i class="caret"></i></div>
</div>
<div class="group g-intent">
<div class="gbody center"><div class="big"><span class="bigico"><svg class="b32"><use href="#puzzle"/></svg></span><span>元件界面</span></div></div>
<div class="glabel">模型意图<i class="caret"></i></div>
</div>
<div class="group g-wjt">
<div class="gbody">
<div class="big w64"><span class="bigico"><svg class="b32"><use href="#colorwheel"/></svg></span><span>随机着色</span></div>
<div class="big w48"><span class="bigico"><svg class="b32"><use href="#glass"/></svg></span><span>设透明度</span></div>
</div>
<div class="glabel">WJT276</div>
</div>
<div class="group g-close">
<div class="gbody center"><div class="big"><span class="bigico"><svg class="b28"><use href="#closex"/></svg></span><span>关闭</span></div></div>
<div class="glabel">关闭</div>
</div>
<div class="group g-open">
<div class="gbody">
<div class="big w48"><span class="bigico"><svg class="folder"><use href="#folder"/></svg></span><span>打开</span></div>
<div class="opengrid"><svg class="ic"><use href="#s1"/></svg><svg class="ic"><use href="#saveeye"/></svg><svg class="ic"><use href="#saveas"/></svg><svg class="ic"><use href="#abox"/></svg><svg class="ic"><use href="#erase"/></svg><svg class="ic"><use href="#eyebox"/></svg></div>
</div>
<div class="glabel">打开文件<i class="caret"></i></div>
</div>
</section>

<section class="qat">
<span class="slot"><svg class="ic"><use href="#qsave"/></svg></span>
<span class="slot"><svg class="ic"><use href="#qsave2"/></svg></span>
<span class="slot"><svg class="ic"><use href="#qmove"/></svg></span>
<span class="slot"><svg class="ic"><use href="#qbox"/></svg></span>
<span class="slot"><svg class="ic"><use href="#qfind"/></svg></span>
<span class="slot toggled">±.01</span>
<span class="slot"><svg class="ic"><use href="#undo"/></svg></span><span class="cslot"><i class="caret"></i></span>
<span class="slot"><svg class="ic"><use href="#redo"/></svg></span><span class="cslot"><i class="caret"></i></span>
<span class="slot"><svg class="ic"><use href="#qedge"/></svg></span>
<span class="slot"><svg class="ic"><use href="#qtri"/></svg></span>
<span class="slot"><svg class="ic"><use href="#qplanes"/></svg></span>
<span class="slot"><svg class="ic"><use href="#qangle"/></svg></span>
<span class="qgap"></span>
<span class="slot"><svg class="ic"><use href="#qslide"/></svg></span>
<span class="slot"><svg class="ic"><use href="#qcurve"/></svg></span>
<span class="slot"><svg class="ic"><use href="#qgauge"/></svg></span>
<span class="slot"><svg class="ic"><use href="#qsec"/></svg></span>
<span class="slot"><svg class="ic"><use href="#qmesh"/></svg></span>
<span class="slot"><svg class="ic"><use href="#qgrid"/></svg></span>
<span class="slot"><svg class="ic"><use href="#qwedge"/></svg></span>
<span class="slot"><svg class="ic"><use href="#qruler"/></svg></span>
<span class="slot"><svg class="ic"><use href="#copy"/></svg></span>
<span class="slot"><svg class="ic"><use href="#paste"/></svg></span>
<span class="slot"><svg class="ic"><use href="#qtable"/></svg></span>
<span class="slot"><svg class="ic"><use href="#trim"/></svg></span>
<span class="slot"><svg class="ic"><use href="#solid"/></svg></span>
<span class="slot"><svg class="ic"><use href="#bodySphere"/></svg></span>
<span class="slot"><svg class="ic"><use href="#qtree"/></svg></span>
<span class="slot"><svg class="ic"><use href="#qscene"/></svg></span>
<span class="slot"><svg class="ic"><use href="#qarc"/></svg></span>
<span class="slot"><svg class="ic"><use href="#qflat"/></svg></span>
<span class="slot"><svg class="ic"><use href="#qfrag"/></svg></span>
<span class="slot"><svg class="ic"><use href="#qsine"/></svg></span>
<span class="qhide"></span>
<span class="slot"><svg class="ic"><use href="#qcolor"/></svg></span>
<span class="slot dslot">d=</span>
<span class="slot"><svg class="ic"><use href="#qfx"/></svg></span>
<span class="slot"><svg class="ic"><use href="#qsphere"/></svg></span>
<span class="slot"><svg class="ic"><use href="#qsine"/></svg></span>
<span class="slot"><svg class="ic"><use href="#extend"/></svg></span>
<span class="slot"><svg class="ic"><use href="#abox"/></svg></span>
<span class="slot"><svg class="ic"><use href="#qlist"/></svg></span>
<span class="slot"><svg class="ic"><use href="#qpart"/></svg></span>
<span class="slot"><svg class="ic"><use href="#qprint"/></svg></span>
<span class="slot"><svg class="ic"><use href="#qwin"/></svg></span>
</section>

<main class="work">
<aside class="side">
<div class="strip"><svg class="stripdoc"><use href="#tdoc"/></svg></div>
<div class="panel">
<div class="ptools">
<svg class="ic"><use href="#tbar1"/></svg>
<svg class="dots"><use href="#tdots"/></svg>
<svg class="ic t60"><use href="#tbar2"/></svg>
<svg class="bar3"><use href="#tbar3"/></svg>
<b class="more">»</b>
<svg class="ic t141"><use href="#tdoc"/></svg>
</div>
<div class="filter">
<svg class="ic"><use href="#funnel"/></svg>
<div class="search"><span>×</span></div>
<i class="caret"></i>
<b class="plus">+</b>
</div>
<ul class="tree">
<li class="l0"><svg class="prtic"><use href="#prt"/></svg><span>罩壳.PRT</span></li>
<li class="l1"><svg class="ic"><use href="#quilt"/></svg><span>面组 (2)</span></li>
<li class="l2"><i class="caret tw"></i><svg class="ic"><use href="#quilt"/></svg><span>面组1</span></li>
<li class="l3"><svg class="ic"><use href="#copied"/></svg><span>复制 1</span></li>
<li class="l2"><i class="tc"></i><svg class="ic"><use href="#quilt"/></svg><span>面组2</span></li>
<li class="l1"><svg class="ic"><use href="#bodies"/></svg><span>主体 (1)</span></li>
</ul>
</div>
</aside>
<div class="canvas">
<svg class="model" viewBox="168 190 1059 215">
<path d="M318 405L513 315C545 340 590 358 620 372S680 398 700 405z" fill="#99a4b1"/>
<g fill="#96a3ec" transform="translate(420 312) scale(.3333)">
<path d="M278 3L300 18 330 40 345 55 420 92 470 118 500 130 620 185 600 210 560 200 530 215 500 238 470 235 490 205 440 195 380 170 340 210 290 205 310 150 290 150 255 195 225 200 270 145 240 125 270 100 292 60 260 65 190 125 250 62 268 30z"/>
<path d="M110 279L135 232 165 242 190 228 190 252 240 240 268 246 255 279zM40 279L78 232 60 279zM0 279L25 250 35 255 15 279zM120 182L350 226 600 258 600 272 350 240 120 188zM500 279L600 262 620 279z"/>
</g>
<g fill="#99a4b1" transform="translate(420 312) scale(.3333)">
<path d="M385 150L440 145 530 160 470 168zM360 175L440 180 470 215 350 215zM290 150L345 140 300 132 260 122zM505 205L545 208 520 235 490 235zM330 70L385 85 350 95z"/>
</g>
<g fill="#96a3ec" transform="translate(300 300) scale(.3333)">
<path d="M55 315L290 205 275 240 335 215 305 255 280 315zM365 315L395 287 400 298 440 265 420 305 470 280 480 315z"/>
</g>
<path d="M318 405L513 315C545 340 590 358 620 372S680 398 700 405" fill="none" stroke="#27333d" stroke-width="1"/>
</svg>
</div>
</main>

<div class="viewbar">
<span class="vslot"><svg class="ic"><use href="#vfit"/></svg></span>
<span class="vslot"><svg class="ic"><use href="#vin"/></svg></span>
<span class="vslot"><svg class="ic"><use href="#vout"/></svg></span>
<span class="vslot"><svg class="ic"><use href="#vrepaint"/></svg></span>
<span class="vslot"><svg class="ic"><use href="#vshade"/></svg></span>
<span class="vslot"><svg class="ic"><use href="#vcube"/></svg></span>
<span class="vslot"><svg class="ic"><use href="#vhex"/></svg></span>
<span class="vhide"></span>
<span class="vslot"><svg class="ic20"><use href="#vplane"/></svg></span>
<span class="vslot"><svg class="ic"><use href="#vaxis"/></svg></span>
<span class="vslot"><svg class="ic"><use href="#vpoint"/></svg></span>
<span class="vslot"><svg class="ic"><use href="#vcsys"/></svg></span>
<span class="vslot"><svg class="ic"><use href="#vnote"/></svg></span>
<span class="vslot"><svg class="ic"><use href="#vnet"/></svg></span>
<span class="vslot"><svg class="ic"><use href="#vtri"/></svg></span>
<span class="vslot"><svg class="ic"><use href="#vpause"/></svg></span>
<span class="vslot"><svg class="ic"><use href="#vgrad"/></svg></span>
</div>

<div class="menu">
<div class="mitem"><span class="mico"></span><span>圆锥曲面和N侧曲面片</span></div>
<div class="mitem"><span class="mico"></span><span>重新造型</span></div>
<div class="mitem"><span class="mico"><svg class="ic"><use href="#mvertex"/></svg></span><span>顶点倒圆角</span></div>
<div class="mitem"><span class="mico"></span><span>将切面混合到曲面</span></div>
<div class="mitem hot"><span class="mico"><svg class="ic"><use href="#flat"/></svg></span><span>展平面组</span></div>
<div class="mitem"><span class="mico"><svg class="ic"><use href="#deform"/></svg></span><span>展平面组变形</span></div>
<div class="mitem"><span class="mico"><svg class="ic"><use href="#mint"/></svg></span><span>内部体积块</span></div>
<div class="mitem"><span class="mico"><svg class="ic"><use href="#mout"/></svg></span><span>外围体积块</span></div>
</div>

<div class="redbox"></div>

<div class="tip">
<div class="tiphead"><svg class="ic"><use href="#flat"/></svg><strong>展平面组</strong></div>
<p>展开曲面、面组或实体曲面，以使其位于单一<br>平面中。</p>
</div>

<div class="mark">
<svg class="flame"><use href="#flame"/></svg>
<div class="marktext"><span class="fire">野火</span><span class="forum">论坛</span></div>
<div class="markurl">www.proewildfire.cn</div>
</div>
</body>
</html>
```

FILE: styles.css
```css
* { box-sizing: border-box; }
html, body { margin: 0; padding: 0; }
body {
  position: relative;
  width: 1227px;
  height: 405px;
  overflow: hidden;
  background: #fff;
  font-family: "Noto Sans", "Noto Sans CJK SC", sans-serif;
  font-size: 12px;
  color: #4c4c4c;
}
svg { display: block; flex: none; }
.defs { position: absolute; width: 0; height: 0; }
.ic { width: 16px; height: 16px; }
.ic17 { width: 17px; height: 17px; }
.ic18 { width: 18px; height: 18px; }
.ic20 { width: 20px; height: 16px; }
.b32 { width: 32px; height: 32px; }
.b28 { width: 28px; height: 28px; }
.plane { width: 30px; height: 24px; margin-top: 4px; }
.sketch { width: 30px; height: 28px; margin-top: 2px; }
.folder { width: 33px; height: 28px; margin-top: 2px; }

.titlebar {
  height: 25px;
  background: #fafafa;
  padding-left: 479px;
  font-size: 13px;
  line-height: 25px;
  letter-spacing: .12px;
  color: #444;
  white-space: nowrap;
}

.tabs {
  height: 29px;
  background: #3c4548;
  display: flex;
  overflow: hidden;
  font-size: 13px;
  line-height: 29px;
  color: #fff;
  white-space: nowrap;
}
.tab { padding: 0 23.5px; flex: none; }
.tab.tight { padding-right: 12px; letter-spacing: .5px; }
.tab.latin { letter-spacing: .35px; }
.cjk { font-family: "Noto Sans CJK SC", sans-serif; letter-spacing: 0; }
.tab.active {
  width: 64px;
  padding: 0 0 0 14px;
  background: #fff;
  color: #4c8a3a;
}

.ribbon {
  height: 112px;
  display: flex;
  overflow: hidden;
  background: #fff;
  border-bottom: 1px solid #c4cccc;
}
.group {
  flex: none;
  display: flex;
  flex-direction: column;
  height: 111px;
  position: relative;
  border-right: 1px solid #ccd3d3;
}
.g-op { width: 100px; }
.g-get { width: 70px; }
.g-body { width: 53px; }
.g-datum { width: 151px; }
.g-shape { width: 123px; }
.g-eng { width: 151px; }
.g-edit { width: 157px; }
.g-surf { width: 87px; }
.g-intent { width: 70px; }
.g-wjt { width: 119px; }
.g-close { width: 53px; }
.g-open { width: 174px; border-right: 0; }

.gbody { height: 87px; display: flex; }
.gbody.center { justify-content: center; }
.gbody.pl8 { padding-left: 8px; }
.glabel {
  height: 24px;
  display: flex;
  align-items: center;
  justify-content: center;
  gap: 3px;
  white-space: nowrap;
}
.glabel.open { background: #e6eced; }

.big {
  display: flex;
  flex-direction: column;
  align-items: center;
  flex: none;
  white-space: nowrap;
  line-height: 18px;
}
.bigico { height: 47px; padding-top: 5px; display: block; }
.big .caret { margin-top: 5px; }
.w62 { width: 62px; }
.w64 { width: 64px; }
.w48 { width: 48px; }
.w47 { width: 47px; }
.w49 { width: 49px; }
.w56 { width: 56px; }
.w78 { width: 78px; }
.pl2 { padding-left: 2px; }

.col { display: flex; flex-direction: column; padding-top: 1px; flex: none; }
.row { height: 28px; display: flex; align-items: center; white-space: nowrap; }
.sp2 { margin-left: 2px; }
.sp3 { margin-left: 3px; }
.ml6 { margin-left: 6px; }

.caret {
  display: block;
  width: 0;
  height: 0;
  flex: none;
  border-style: solid;
  border-width: 4px 3.5px 0;
  border-color: #5f5f5f transparent transparent;
}
.row .ml6 { border-top-color: #8a8a8a; }

.editgrid {
  display: grid;
  grid-template-columns: repeat(4, 24px) 14px;
  grid-auto-rows: 28px;
  align-items: center;
  padding-top: 1px;
}
.opengrid {
  display: grid;
  grid-template-columns: 23px 23px;
  grid-auto-rows: 28px;
  align-items: center;
  padding: 1px 0 0 1px;
}

.qat {
  height: 25px;
  display: flex;
  align-items: center;
  padding-left: 4px;
  background: #fff;
  border-bottom: 1px solid #c4cccc;
}
.slot { width: 24px; height: 24px; flex: none; display: flex; align-items: center; justify-content: center; }
.cslot { width: 14px; display: flex; justify-content: center; flex: none; }
.cslot .caret { border-top-color: #aaa; }
.qgap { width: 8px; flex: none; }
.qhide { width: 168px; flex: none; }
.toggled {
  background: #e3e6e6;
  border: 1px solid #cfd4d4;
  font-size: 11px;
  color: #444;
  letter-spacing: -.3px;
}
.dslot { font-size: 15px; font-weight: 700; color: #333; }

.work { display: flex; height: 215px; }
.side { width: 168px; flex: none; background: #e8eded; display: flex; padding-top: 27px; }
.strip { width: 9px; background: #fff; margin-right: 3px; overflow: hidden; padding-top: 7px; }
.stripdoc { width: 16px; height: 16px; margin-left: -9px; }
.panel { width: 153px; background: #fff; overflow: hidden; }
.ptools { height: 32px; display: flex; align-items: center; padding-left: 4px; }
.dots { width: 4px; height: 16px; margin-left: 7px; }
.t60 { margin-left: 15px; }
.bar3 { width: 9px; height: 16px; margin-left: 11px; }
.more { margin-left: 25px; font-size: 14px; color: #333; line-height: 1; font-weight: 400; }
.t141 { margin-left: 10px; }

.filter { display: flex; align-items: center; padding-left: 4px; height: 28px; margin-bottom: 1px; }
.search {
  width: 80px;
  height: 28px;
  margin-left: 4px;
  border: 1px solid #b8c4c4;
  display: flex;
  align-items: center;
  justify-content: flex-end;
  padding-right: 3px;
  font-size: 16px;
  color: #b5b5b5;
}
.filter .caret { margin-left: 7px; }
.plus { margin-left: 12px; font-size: 20px; line-height: 1; color: #9a9a9a; }

.tree { list-style: none; margin: 0; padding: 0; color: #4c4c4c; }
.tree li { height: 22px; display: flex; align-items: center; white-space: nowrap; position: relative; }
.tree li span { margin-left: 5px; }
.tree .l0 span { margin-left: 7px; }
.prtic { width: 4px; height: 14px; }
.l1 { padding-left: 10px; }
.l2 { padding-left: 30px; }
.l3 { padding-left: 50px; }
.tw { position: absolute; left: 15px; top: 9px; }
.tc {
  position: absolute;
  left: 16px;
  top: 7px;
  width: 0;
  height: 0;
  border-style: solid;
  border-width: 3.5px 0 3.5px 4px;
  border-color: transparent transparent transparent #666;
}

.canvas { flex: 1; position: relative; overflow: hidden; background: linear-gradient(#52a4ca, #75aabd); }
.model { position: absolute; left: 0; top: 0; width: 1059px; height: 215px; }

.viewbar {
  position: absolute;
  left: 638px;
  top: 198px;
  width: 576px;
  height: 31px;
  padding-left: 3px;
  display: flex;
  align-items: center;
  background: #fff;
  border: 1px solid #cfe0e6;
}
.vslot { width: 26px; height: 26px; flex: none; display: flex; align-items: center; justify-content: center; }
.vhide { width: 156px; flex: none; }

.menu {
  position: absolute;
  left: 806px;
  top: 167px;
  width: 178px;
  height: 185px;
  padding-top: 1px;
  background: #fff;
  border: 1px solid #d5dede;
  box-shadow: 2px 2px 4px rgba(0, 0, 0, .45);
}
.mitem { height: 22.75px; display: flex; align-items: center; white-space: nowrap; }
.mico { width: 27px; height: 100%; margin-right: 7px; flex: none; display: flex; align-items: center; justify-content: center; border-right: 1px solid #e3e8e8; padding-right: 1px; }
.hot { background: #cfeffb; }

.redbox {
  position: absolute;
  left: 783px;
  top: 250px;
  width: 169px;
  height: 59px;
  border: 3px solid #e02b1d;
  border-radius: 4px;
}

.tip {
  position: absolute;
  left: 913px;
  top: 300px;
  width: 275px;
  height: 83px;
  padding: 11px 12px;
  background: #fff;
  border: 1px solid #bcdbe4;
  box-shadow: 4px 4px 5px rgba(0, 0, 0, .4);
  color: #222;
}
.tiphead { display: flex; align-items: center; gap: 7px; height: 18px; color: #444; }
.tiphead strong { font-weight: 700; }
.tip p { margin: 5px 0 0; line-height: 18px; }

.mark { position: absolute; left: 1040px; top: 320px; width: 187px; height: 85px; }
.flame { position: absolute; left: 70px; top: 2px; width: 17px; height: 46px; }
.marktext { position: absolute; left: 1px; top: 15px; display: flex; font-size: 39px; line-height: 44px; font-weight: 300; font-family: "Noto Sans CJK SC", sans-serif; white-space: nowrap; }
.fire { color: #f26d3d; }
.forum { color: #111; margin-left: 11px; }
.markurl { position: absolute; left: 3px; top: 58px; font-size: 17px; font-style: italic; letter-spacing: .4px; color: rgba(90, 110, 125, .45); white-space: nowrap; font-family: "Liberation Sans", sans-serif; }
```
